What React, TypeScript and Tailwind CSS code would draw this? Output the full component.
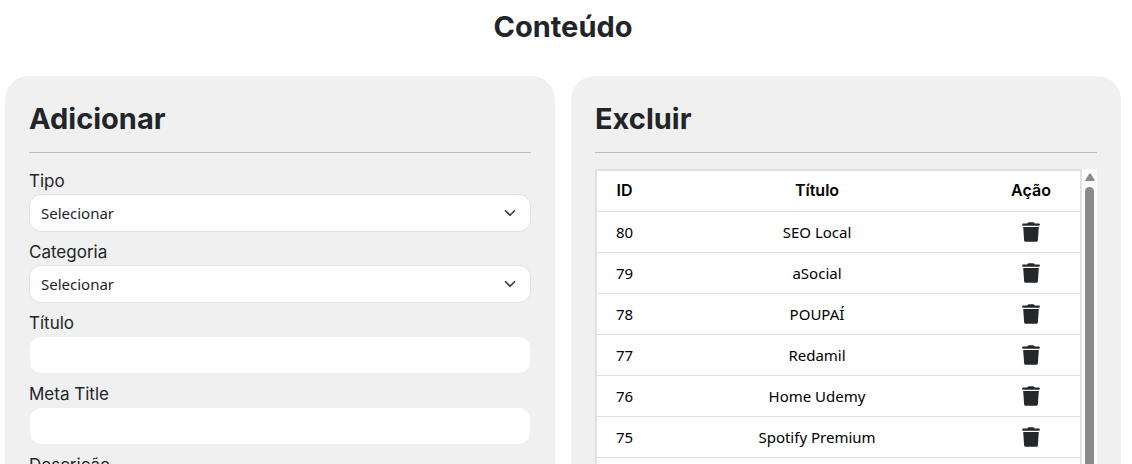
import { useId } from 'react';

const items = [
  { id: 80, title: 'SEO Local' },
  { id: 79, title: 'aSocial' },
  { id: 78, title: 'POUPAÍ' },
  { id: 77, title: 'Redamil' },
  { id: 76, title: 'Home Udemy' },
  { id: 75, title: 'Spotify Premium' },
];

const labelClass = "block font-['Inter',sans-serif] text-[17px] leading-[25px]";

function SelectField({ label }: { label: string }) {
  const id = useId();
  return (
    <div>
      <label htmlFor={id} className={labelClass}>
        {label}
      </label>
      <div className="grid items-center">
        <select
          id={id}
          className="col-start-1 row-start-1 h-[38px] w-full appearance-none rounded-xl border border-[#dee2e6] bg-white px-[11px] text-[15px]"
        >
          <option>Selecionar</option>
        </select>
        <svg
          viewBox="0 0 16 16"
          className="pointer-events-none col-start-1 row-start-1 mr-[13px] h-3 w-4 justify-self-end"
          fill="none"
          stroke="#343a40"
          strokeWidth="2.2"
          strokeLinecap="round"
          strokeLinejoin="round"
          aria-hidden="true"
        >
          <path d="m2 5 6 6 6-6" />
        </svg>
      </div>
    </div>
  );
}

function TextField({ label }: { label: string }) {
  const id = useId();
  return (
    <div>
      <label htmlFor={id} className={labelClass}>
        {label}
      </label>
      <input
        id={id}
        type="text"
        className="block h-[38px] w-full rounded-xl border border-[#efefef] bg-white px-[11px] text-[15px]"
      />
    </div>
  );
}

function TrashIcon() {
  return (
    <svg viewBox="0 0 18 20" className="mx-auto h-5 w-[18px] fill-[#25282b]" aria-hidden="true">
      <path d="M5.6.9Q6 .3 6.8.3h4.4q.8 0 1.2.6l.3.6H17q.8 0 .8.8v.7q0 .7-.8.7H1q-.8 0-.8-.7v-.7q0-.8.8-.8h4.3Z" />
      <path d="M1.2 5h15.6l-.9 13.3q-.1 1.5-1.6 1.5H3.7q-1.5 0-1.6-1.5Z" />
    </svg>
  );
}

function Card({ title, children }: { title: string; children: React.ReactNode }) {
  return (
    <section className="flex min-w-0 flex-1 flex-col rounded-t-3xl bg-[#f0f0f0] px-6 pt-[26px]">
      <h2 className="font-['Inter',sans-serif] text-[29px] leading-[34px] font-bold">{title}</h2>
      <hr className="my-4 border-[#bcbdbe]" />
      {children}
    </section>
  );
}

export default function App() {
  return (
    <main className="flex h-screen flex-col overflow-hidden bg-white pt-[10px] pr-[11px] pl-[5px] font-['Noto_Sans',sans-serif] text-[#212529]">
      <h1 className="mb-8 text-center font-['Inter',sans-serif] text-[29px] leading-[34px] font-bold">Conteúdo</h1>
      <div className="flex min-h-0 flex-1 gap-4">
        <Card title="Adicionar">
          <form className="flex flex-col gap-2">
            <SelectField label="Tipo" />
            <SelectField label="Categoria" />
            <TextField label="Título" />
            <TextField label="Meta Title" />
            <TextField label="Descrição" />
          </form>
        </Card>
        <Card title="Excluir">
          <div className="flex min-h-0 flex-1">
            <div className="min-w-0 flex-1 overflow-hidden border-2 border-b-0 border-[#dee2e6] bg-white">
              <table className="w-full table-fixed text-center text-[15px] text-black">
                <thead className="font-['Inter',sans-serif] text-base">
                  <tr className="h-10 border-b border-[#dee2e6]">
                    <th className="w-[55px] pb-px font-semibold">ID</th>
                    <th className="pb-px font-semibold">Título</th>
                    <th className="w-[98px] pb-px font-semibold">Ação</th>
                  </tr>
                </thead>
                <tbody>
                  {items.map((item) => (
                    <tr key={item.id} className="h-[41px] border-b border-[#dee2e6]">
                      <td className="pt-px">{item.id}</td>
                      <td className="pt-px">{item.title}</td>
                      <td className="pt-px">
                        <button type="button" aria-label="Excluir" className="block w-full">
                          <TrashIcon />
                        </button>
                      </td>
                    </tr>
                  ))}
                </tbody>
              </table>
            </div>
            <div className="flex w-[15px] flex-col items-center bg-[#fcfcfc] pt-1" aria-hidden="true">
              <svg viewBox="0 0 10 8" className="mb-[6px] h-2 w-[10px] shrink-0 fill-[#8b8b8b]">
                <path d="M4.2.8Q5 0 5.8.8L9.4 6.4Q10 8 8.8 8H1.2Q0 8 .6 6.4Z" />
              </svg>
              <div className="w-[9px] flex-1 rounded-t-full bg-[#8b8b8b]" />
            </div>
          </div>
        </Card>
      </div>
    </main>
  );
}
